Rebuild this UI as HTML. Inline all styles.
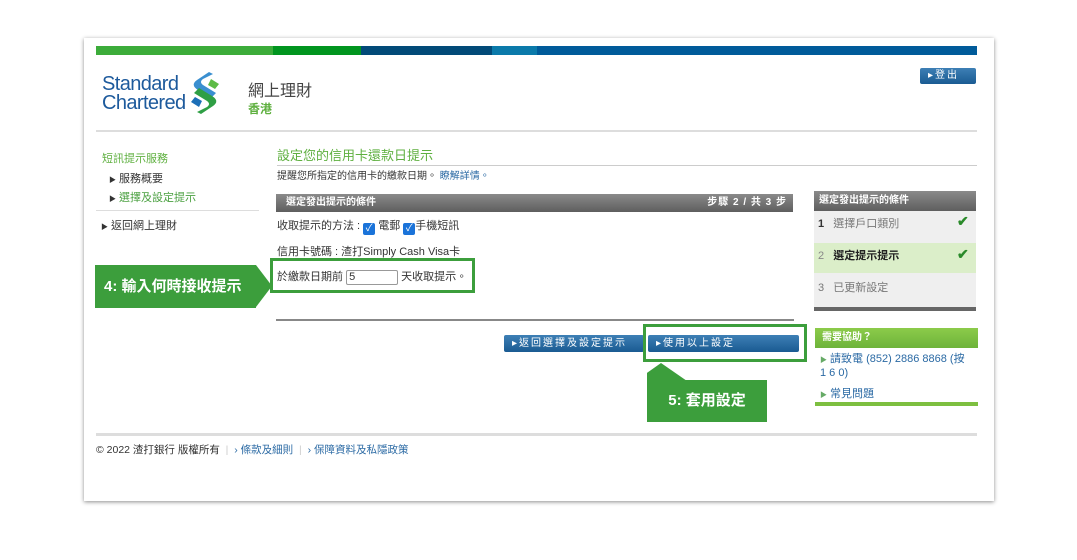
<!DOCTYPE html>
<html><head><meta charset="utf-8"><style>
*{margin:0;padding:0;box-sizing:border-box}
body{width:1077px;height:560px;background:#fff;position:relative;overflow:hidden;font-family:"Liberation Sans","Noto Sans CJK TC",sans-serif;font-size:11px;color:#333}
.a{position:absolute}
.card{left:84px;top:38px;width:910px;height:463px;background:#fff;box-shadow:0 1px 4px rgba(0,0,0,.45)}
.hbar{top:46px;height:9px}
.gray{background:linear-gradient(#8a8a8a,#5e5e5e);color:#fff;font-weight:bold}
.btn{background:linear-gradient(#3d7fb5,#1a5b92);color:#fff;border-radius:2px;letter-spacing:2px;font-size:10px;padding-left:8px;line-height:17px}
.lnk{color:#2b6aa4}
.gbox{border:3px solid #3c9e3c}
.tag{background:#3c9e3c;color:#fff;font-weight:bold;font-size:15px}
.ck{display:inline-block;width:12px;height:12px;background:#1a73d9;border-radius:2px;color:#fff;font-size:10px;line-height:12px;text-align:center;vertical-align:-2px}
</style></head><body>
<div class="a card"></div>
<div class="a hbar" style="left:96px;width:177px;background:#3cac3a"></div>
<div class="a hbar" style="left:273px;width:88px;background:#01951f"></div>
<div class="a hbar" style="left:361px;width:131px;background:#024a78"></div>
<div class="a hbar" style="left:492px;width:45px;background:#0b7aaa"></div>
<div class="a hbar" style="left:537px;width:440px;background:#005b9a"></div>

<div class="a" style="left:102px;top:75px;color:#1d5a9c;font-size:20px;line-height:19px;letter-spacing:-.6px">Standard<br>Chartered</div>
<svg class="a" style="left:189px;top:70px" width="32" height="46" viewBox="0 0 32 46">
<path d="M20 2 L8 10 Q1 15 9 20 L22 28 L27 23 L14 15 Q10 12 14 9 L24 4 Z" fill="#3a8fd0"/>
<path d="M12 44 L24 36 Q31 31 23 26 L10 18 L5 23 L18 31 Q22 34 18 37 L8 42 Z" fill="#2f9f45"/>
<path d="M22 9 L30 14 L26 19 L19 15Z" fill="#5dbb46"/>
<path d="M10 37 L2 32 L6 27 L13 31Z" fill="#1d6fb8"/>
</svg>
<div class="a" style="left:248px;top:77px;font-size:16px;color:#444">網上理財</div>
<div class="a" style="left:248px;top:100px;font-size:12px;color:#5fb040;font-weight:bold">香港</div>
<div class="a btn" style="left:920px;top:68px;width:56px;height:16px;line-height:16px">▸登出</div>
<div class="a" style="left:96px;top:130px;width:881px;height:2px;background:#ddd"></div>

<div class="a" style="left:102px;top:150px;color:#5fb040;font-size:11px">短訊提示服務</div>
<div class="a" style="left:109px;top:170px"><span style="font-size:7px">▶</span> 服務概要</div>
<div class="a" style="left:109px;top:189px;color:#4aa040"><span style="font-size:7px;color:#333">▶</span> 選擇及設定提示</div>
<div class="a" style="left:96px;top:210px;width:163px;height:1px;background:#ddd"></div>
<div class="a" style="left:101px;top:217px"><span style="font-size:7px">▶</span> 返回網上理財</div>

<div class="a" style="left:277px;top:148px;color:#5fb040;font-size:13px;line-height:16px">設定您的信用卡還款日提示</div>
<div class="a" style="left:277px;top:165px;width:700px;height:1px;background:#ccc"></div>
<div class="a" style="left:277px;top:167px;font-size:10px">提醒您所指定的信用卡的繳款日期。 <span class="lnk">瞭解詳情。</span></div>
<div class="a gray" style="left:276px;top:194px;width:517px;height:18px;line-height:18px;font-size:10px;padding:0 6px 0 10px">選定發出提示的條件<span style="float:right;letter-spacing:1px">步驟 2 / 共 3 步</span></div>
<div class="a" style="left:277px;top:217px">收取提示的方法 : <span class="ck">✓</span> 電郵 <span class="ck">✓</span>手機短訊</div>
<div class="a" style="left:277px;top:243px">信用卡號碼 : 渣打Simply Cash Visa卡</div>
<div class="a" style="left:277px;top:268px">於繳款日期前 <span style="display:inline-block;width:52px;height:15px;border:1px solid #999;border-radius:2px;vertical-align:middle;padding-left:2px;line-height:13px">5</span> 天收取提示。</div>
<div class="a gbox" style="left:270px;top:258px;width:205px;height:35px"></div>
<div class="a" style="left:276px;top:319px;width:518px;height:2px;background:#888"></div>

<div class="a tag" style="left:95px;top:265px;width:161px;height:43px;line-height:43px;padding-left:9px">4: 輸入何時接收提示</div>
<div class="a" style="left:256px;top:265px;width:0;height:0;border-top:21px solid transparent;border-bottom:21px solid transparent;border-left:16px solid #3c9e3c"></div>

<div class="a btn" style="left:504px;top:335px;width:140px;height:17px">▸返回選擇及設定提示</div>
<div class="a btn" style="left:648px;top:335px;width:151px;height:17px">▸使用以上設定</div>
<div class="a gbox" style="left:643px;top:324px;width:164px;height:38px"></div>
<div class="a" style="left:647px;top:363px;width:40px;height:18px;background:#3c9e3c;clip-path:polygon(0 100%,0 55%,35% 0,100% 100%)"></div>
<div class="a tag" style="left:647px;top:380px;width:120px;height:42px;line-height:42px;text-align:center">5: 套用設定</div>

<div class="a" style="left:814px;top:191px;width:162px;height:120px;background:#efefef;border-bottom:4px solid #666"></div>
<div class="a gray" style="left:814px;top:191px;width:162px;height:20px;line-height:20px;padding-left:5px;font-size:10px">選定發出提示的條件</div>
<div class="a" style="left:818px;top:215px;color:#777"><b style="color:#333">1</b>&nbsp;&nbsp; 選擇戶口類別</div>
<div class="a" style="left:814px;top:243px;width:162px;height:30px;background:#dbeec9"></div>
<div class="a" style="left:818px;top:247px;color:#222"><span style="color:#888">2</span>&nbsp;&nbsp; <b>選定提示提示</b></div>
<div class="a" style="left:818px;top:279px;color:#777">3&nbsp;&nbsp; 已更新設定</div>
<div class="a" style="left:957px;top:213px;color:#2a8a2a;font-size:14px;font-weight:bold">✔</div>
<div class="a" style="left:957px;top:246px;color:#2a8a2a;font-size:14px;font-weight:bold">✔</div>

<div class="a" style="left:815px;top:328px;width:163px;height:20px;background:linear-gradient(#8ccb4a,#6db33a);color:#fff;font-weight:bold;line-height:20px;padding-left:7px;font-size:10px">需要協助？</div>
<div class="a lnk" style="left:820px;top:353px;width:152px;line-height:12px"><span style="font-size:7px;color:#6a6">▶</span> 請致電 (852) 2886 8868 (按 1 6 0)</div>
<div class="a lnk" style="left:820px;top:385px"><span style="font-size:7px;color:#6a6">▶</span> 常見問題</div>
<div class="a" style="left:815px;top:402px;width:163px;height:4px;background:#7dbf40"></div>

<div class="a" style="left:96px;top:433px;width:881px;height:3px;background:#ddd"></div>
<div class="a" style="left:96px;top:442px;font-size:10.5px">© 2022 渣打銀行 版權所有 <span style="color:#ccc">&nbsp;|&nbsp;</span> <span class="lnk">› 條款及細則</span> <span style="color:#ccc">&nbsp;|&nbsp;</span> <span class="lnk">› 保障資料及私隱政策</span></div>
</body></html>
